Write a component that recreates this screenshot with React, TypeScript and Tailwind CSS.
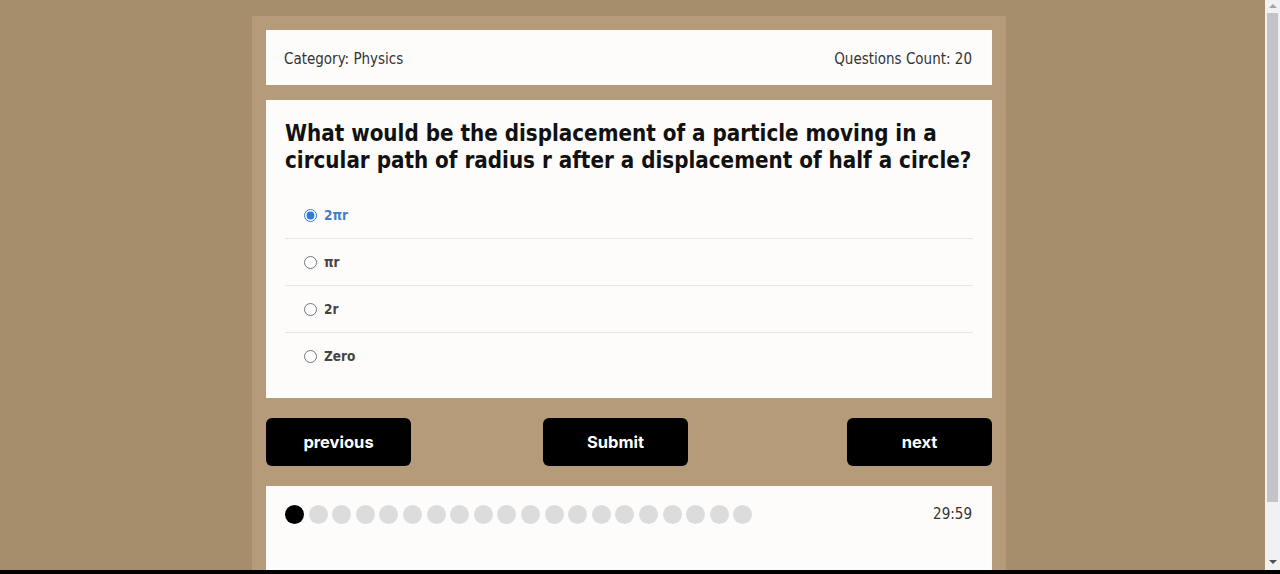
import React, { useState } from 'react';

const options = ['2πr', 'πr', '2r', 'Zero'];
const total = 20;

// fake browser scrollbar seen on the right edge of the capture
const ScrollBar: React.FC = () => (
  <div className="fixed top-0 right-0 flex h-full w-[15px] flex-col items-center bg-[#f1f1f1]">
    <div className="mt-[4px] h-0 w-0 border-x-[4px] border-b-[4px] border-x-transparent border-b-[#a3a3a3]" />
    <div className="mt-[5px] h-[489px] w-[11px] bg-[#c3c3c8]" />
    <div className="mt-auto mb-[10px] h-0 w-0 border-x-[4px] border-t-[4px] border-x-transparent border-t-[#505050]" />
  </div>
);

const App: React.FC = () => {
  const [selected, setSelected] = useState(0);
  const current = 0;

  return (
    <div className="min-h-[620px] bg-[#a68d6b] pt-[16px] font-['DejaVu_Sans_Condensed','DejaVu_Sans',sans-serif]">
      <div className="ml-[252px] w-[754px] bg-[#b59b79] px-[14px] pt-[14px] pb-[40px]">
        <div className="flex h-[55px] items-center justify-between bg-[#fdfcfb] pt-[3px] pl-[18px] pr-[20px] text-[15px] text-[#333]">
          <span>Category: Physics</span>
          <span>Questions Count: 20</span>
        </div>

        <div className="mt-[15px] bg-[#fdfcfb] px-[19px] pt-[20px] pb-[18px]">
          <h2 className="text-[22.2px] font-bold leading-[27px] text-[#111]">
            What would be the displacement of a particle moving in a circular path of radius r after a displacement of half a circle?
          </h2>
          <div className="mt-[18px]">
            {options.map((opt, i) => (
              <label
                key={opt}
                className={`flex h-[47px] items-center gap-[7px] pl-[19px] ${i < options.length - 1 ? 'border-b border-[#e8e6e3]' : ''}`}
              >
                <input
                  type="radio"
                  name="answer"
                  checked={selected === i}
                  onChange={() => setSelected(i)}
                  className="m-0 h-[13px] w-[13px] accent-[#2f7bd6]"
                />
                <span className={`text-[13.5px] font-bold ${selected === i ? 'text-[#3f7fc9]' : 'text-[#444]'}`}>{opt}</span>
              </label>
            ))}
          </div>
        </div>

        <div className="mt-[20px] flex font-['Inter',sans-serif] text-[16.5px] font-bold text-white">
          <button className="h-[48px] w-[145px] rounded-[6px] bg-black">previous</button>
          <button className="ml-[132px] h-[48px] w-[145px] rounded-[6px] bg-black">Submit</button>
          <button className="ml-auto h-[48px] w-[145px] rounded-[6px] bg-black">next</button>
        </div>

        <div className="mt-[20px] flex h-[110px] items-start justify-between bg-[#fdfcfb] pl-[19px] pr-[20px] pt-[19px]">
          <div className="flex gap-[4.6px]">
            {Array.from({ length: total }).map((_, i) => (
              <div key={i} className={`h-[19px] w-[19px] rounded-full ${i === current ? 'bg-black' : 'bg-[#dcdcdc]'}`} />
            ))}
          </div>
          <span className="-mt-[2px] text-[15px] text-[#333]">29:59</span>
        </div>
      </div>
      <ScrollBar />
      <div className="fixed bottom-0 left-0 h-[4px] w-full bg-black" />
    </div>
  );
};

export default App;
